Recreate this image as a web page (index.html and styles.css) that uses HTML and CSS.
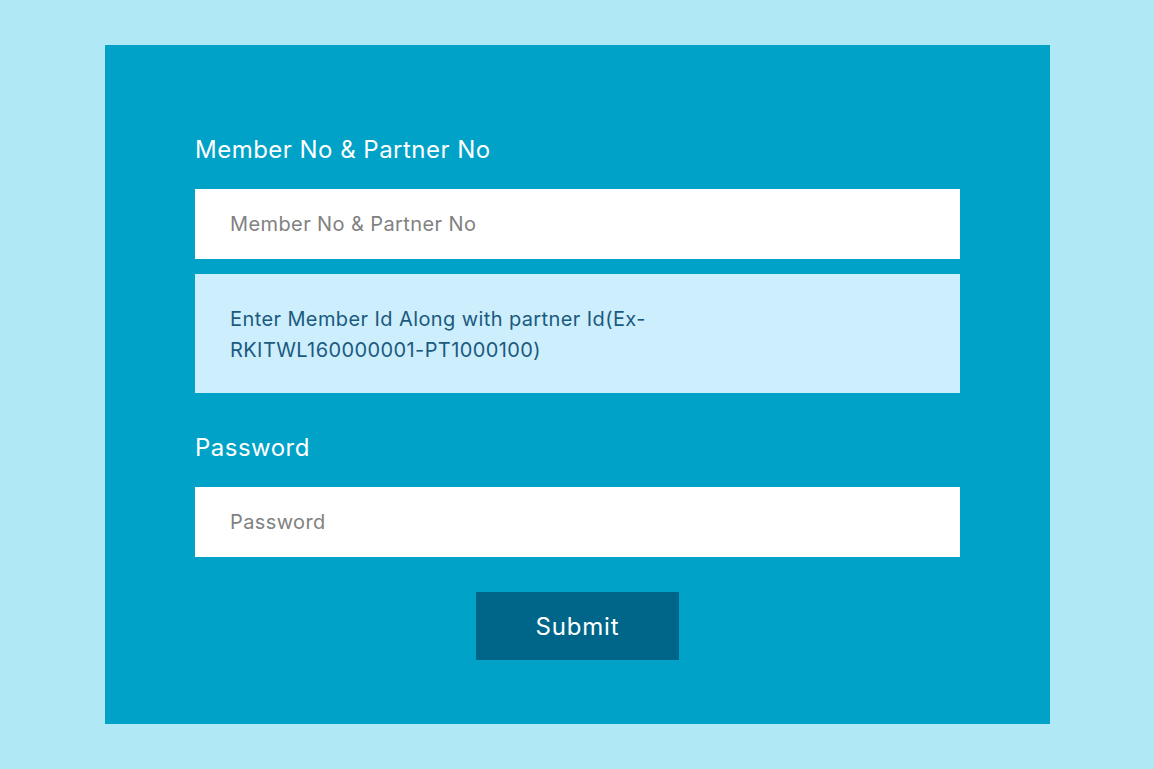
FILE: index.html
```html
<!DOCTYPE html>
<html lang="en">
<head>
<meta charset="utf-8">
<title>Login</title>
<link rel="stylesheet" href="styles.css">
</head>
<body>
<main class="page">
  <form class="card">
    <label class="label" for="member">Member No &amp; Partner No</label>
    <input class="field" id="member" type="text" placeholder="Member No &amp; Partner No">
    <div class="help">Enter Member Id Along with partner Id(Ex-RKITWL160000001-PT1000100)</div>
    <label class="label label-pw" for="pw">Password</label>
    <input class="field" id="pw" type="password" placeholder="Password">
    <div class="actions">
      <button class="submit" type="button">Submit</button>
    </div>
  </form>
</main>
</body>
</html>
```
FILE: styles.css
```css
* { box-sizing: border-box; }
html, body { margin: 0; padding: 0; }
body {
  background: #b1e8f6;
  font-family: Inter, "Noto Sans", sans-serif;
  width: 1154px;
  height: 769px;
  overflow: hidden;
}
.page {
  padding: 45px 104px 45px 105px;
}
.card {
  width: 945px;
  height: 679px;
  background: #00a2c7;
  padding: 90px 90px 0 90px;
  display: flex;
  flex-direction: column;
}
.label {
  display: block;
  color: #ffffff;
  font-size: 24px;
  letter-spacing: 0.48px;
  line-height: 30px;
  height: 30px;
  margin-bottom: 24px;
}
.label-pw {
  margin-top: 40px;
  margin-bottom: 24px;
}
.field {
  display: block;
  width: 765px;
  height: 70px;
  border: 0;
  outline: none;
  background: #ffffff;
  padding: 0 35px;
  font-family: Inter, "Noto Sans", sans-serif;
  font-size: 20px;
  letter-spacing: 0.4px;
  color: #333;
}
.field::placeholder { color: #818181; }
.help {
  margin-top: 15px;
  width: 765px;
  height: 119px;
  background: #cdeefd;
  color: #1b5a7e;
  font-size: 20px;
  letter-spacing: 0.4px;
  line-height: 31px;
  padding: 30px 260px 0 35px;
}
.actions {
  display: flex;
  justify-content: center;
  margin-top: 35px;
}
.submit {
  width: 203px;
  height: 68px;
  border: 0;
  background: #006689;
  color: #ffffff;
  font-family: Inter, "Noto Sans", sans-serif;
  font-size: 24px;
  cursor: pointer;
  letter-spacing: 0.8px;
}
```
